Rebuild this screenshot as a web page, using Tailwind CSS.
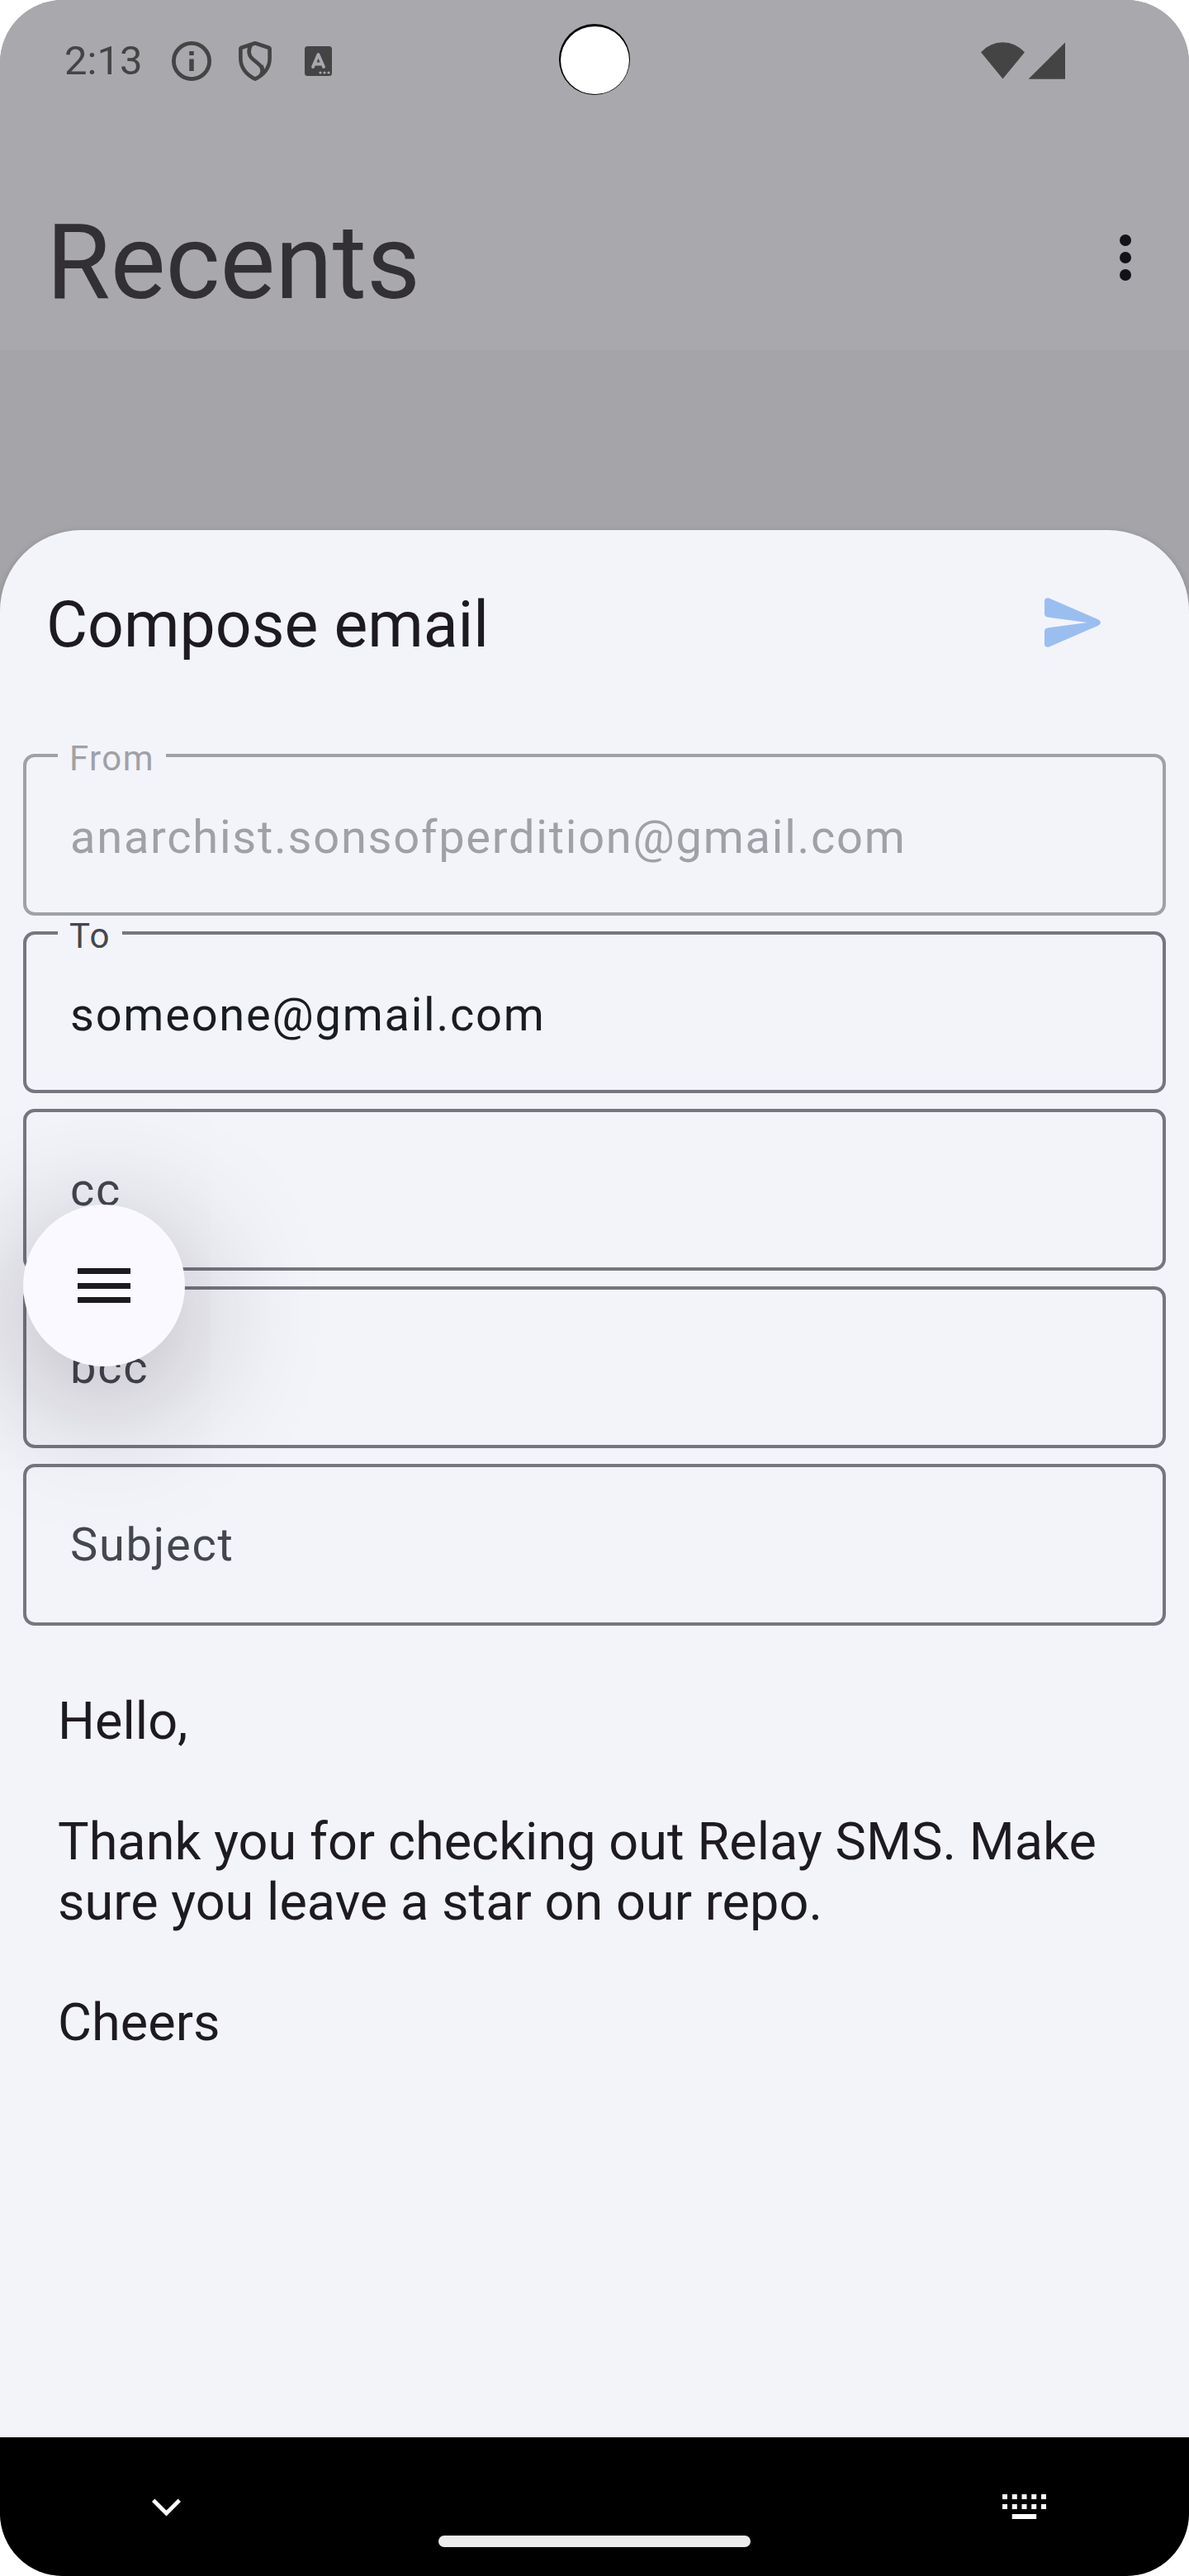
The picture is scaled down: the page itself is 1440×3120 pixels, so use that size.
<!DOCTYPE html>
<html lang="en">
<head>
<meta charset="utf-8">
<title>Compose email</title>
<script src="https://cdn.jsdelivr.net/npm/@tailwindcss/browser@4"></script>
</head>
<body class="bg-white">
<div class="relative flex h-[3120px] w-[1440px] flex-col overflow-hidden rounded-[76px] bg-[#a5a4a8] font-['Roboto',sans-serif] text-[#1d1b20]">

  <!-- Status bar -->
  <header class="relative flex h-[147px] shrink-0 items-center justify-between bg-[#a9a8ad] pr-[150px] pl-[78px] text-[#444]">
    <div class="flex items-center">
      <span class="w-[130px] text-[49px] leading-[49px]">2:13</span>
      <svg class="h-12 w-12" viewBox="0 0 48 48" fill="none" stroke="currentColor"><circle cx="24" cy="24" r="21.600" stroke-width="4.800"/><path d="M24 12v5M24 21.500v14.500" stroke-width="5.500"/></svg>
      <svg class="ml-[33px] h-12 w-10" viewBox="0 0 40 48" fill="none" stroke="currentColor" stroke-width="4.600" stroke-linejoin="round"><path d="M20 2.300 37.200 8Q37.600 8.200 37.600 9V21C37.600 32 30.500 41 20 45.600 9.500 41 2.400 32 2.400 21V9Q2.400 8.200 2.800 8Z"/><path d="M15 4.500C11.500 10 11.500 17 17 21.500L23 26.500C29 31 30 36 27 41"/><path d="M28 29 30.500 37" stroke-width="3.500"/></svg>
      <svg class="ml-10 h-9 w-[33px]" viewBox="0 0 33 36"><rect width="33" height="36" rx="3.500" fill="currentColor"/><path d="M10 25 16.500 10 23 25M12.500 21.500h8" fill="none" stroke="#a9a8ad" stroke-width="3.800" stroke-linecap="round" stroke-linejoin="round"/><g fill="#a9a8ad"><circle cx="19" cy="32" r="1.600"/><circle cx="24" cy="32" r="1.600"/><circle cx="29" cy="32" r="1.600"/></g></svg>
    </div>
    <svg class="h-[45px] w-[102px]" viewBox="0 0 102 45" fill="currentColor"><path d="M0 12.200A35.500 35.500 0 0 1 53 12.200L26.500 44.500Z"/><path d="M57.500 44.700 102 .5V44.700Z"/></svg>
    <!-- Camera cutout -->
    <div class="absolute top-[29px] left-[677px] h-[86px] w-[86px] rounded-full bg-black"><div class="mx-auto mt-[3px] h-[82px] w-[83px] rounded-full bg-white"></div></div>
  </header>

  <!-- App bar -->
  <div class="flex h-[277px] shrink-0 items-start justify-between bg-[#a9a8ad] pt-[97px] pr-[35px] pl-14">
    <h1 class="text-[126px] leading-[148px] text-[#322f35]">Recents</h1>
    <svg class="mt-[26px] h-[84px] w-[84px] fill-[#111318]" viewBox="0 0 24 24"><circle cx="12" cy="6" r="2"/><circle cx="12" cy="12" r="2"/><circle cx="12" cy="18" r="2"/></svg>
  </div>

  <!-- Compose sheet -->
  <main class="relative mt-[218px] h-[2310px] shrink-0 rounded-t-[98px] bg-[#f3f4fa] px-7 shadow-[0_2px_8px_rgba(0,0,0,0.18)]">
    <div class="flex h-[271px] items-start justify-between pt-[70px] pr-[79px] pl-7">
      <h2 class="text-[77px] leading-[90px]">Compose email</h2>
      <svg class="mt-3 h-[60px] w-[68px] fill-[#9bbef0]" viewBox="0 0 68 60"><path d="M5 .3 65 26.300Q68 27.700 68 30T65 33.700L5 59.700Q0 60.300 0 56V40.500Q0 37 4 36.500L52 30 4 23.500Q0 23 0 19.500V4Q0-.3 5 .3Z"/></svg>
    </div>

    <div class="flex flex-col gap-[19px] text-[56px] leading-[66px] tracking-[1.75px] text-[#44474e]">
      <div class="relative flex h-[196px] items-center rounded-[14px] border-4 border-[#a0a1a6] pt-[6px] pl-[53px] text-[#a0a1a6]">
        <span class="absolute top-[-19px] left-[38px] bg-[#f3f4fa] px-[14px] text-[42px] leading-[42px] tracking-[1.4px]">From</span>
        anarchist.sonsofperdition@gmail.com
      </div>
      <div class="relative flex h-[196px] items-center rounded-[14px] border-4 border-[#74777f] pt-[6px] pl-[53px] text-[#191c20]">
        <span class="absolute top-[-19px] left-[38px] bg-[#f3f4fa] px-[14px] text-[42px] leading-[42px] tracking-[1.4px] text-[#44474e]">To</span>
        someone@gmail.com
      </div>
      <div class="flex h-[196px] items-center rounded-[14px] border-4 border-[#74777f] pl-[53px]">cc</div>
      <div class="flex h-[196px] items-center rounded-[14px] border-4 border-[#74777f] pl-[53px]">bcc</div>
      <div class="flex h-[196px] items-center rounded-[14px] border-4 border-[#74777f] pl-[53px]">Subject</div>
    </div>

    <div class="mt-[79px] ml-[42px] text-[63px] leading-[73px] tracking-[0.04px] whitespace-pre-line">Hello,

Thank you for checking out Relay SMS. Make
sure you leave a star on our repo.

Cheers</div>

    <!-- Floating menu button -->
    <button class="absolute top-[817px] left-7 flex h-[196px] w-[196px] flex-col items-center justify-center gap-[10.5px] rounded-full bg-[#faf9ff] shadow-[0_36px_160px_12px_rgba(20,10,20,0.28)]">
      <span class="h-[7px] w-16 bg-[#1b1b1f]"></span>
      <span class="h-[7px] w-16 bg-[#1b1b1f]"></span>
      <span class="h-[7px] w-16 bg-[#1b1b1f]"></span>
    </button>
  </main>

  <!-- Navigation bar -->
  <nav class="relative flex h-[168px] shrink-0 items-start justify-between bg-black pt-[69px] pr-[173px] pl-[184px] text-white">
    <svg class="mt-[5px] h-[22px] w-[35px]" viewBox="0 0 35 22" fill="none" stroke="currentColor" stroke-width="4.800"><path d="M1.700 2.200 17.500 18 33.300 2.200"/></svg>
    <div class="absolute top-[119px] left-[531px] h-[14px] w-[378px] rounded-full bg-[#ebebeb]"></div>
    <svg class="h-[30px] w-[53px]" viewBox="0 0 53 30" fill="none" stroke="currentColor" stroke-width="6"><path d="M0 3h53M0 15h53" stroke-dasharray="6 5.750"/><path d="M11.700 27h29.500"/></svg>
  </nav>
</div>
</body>
</html>
